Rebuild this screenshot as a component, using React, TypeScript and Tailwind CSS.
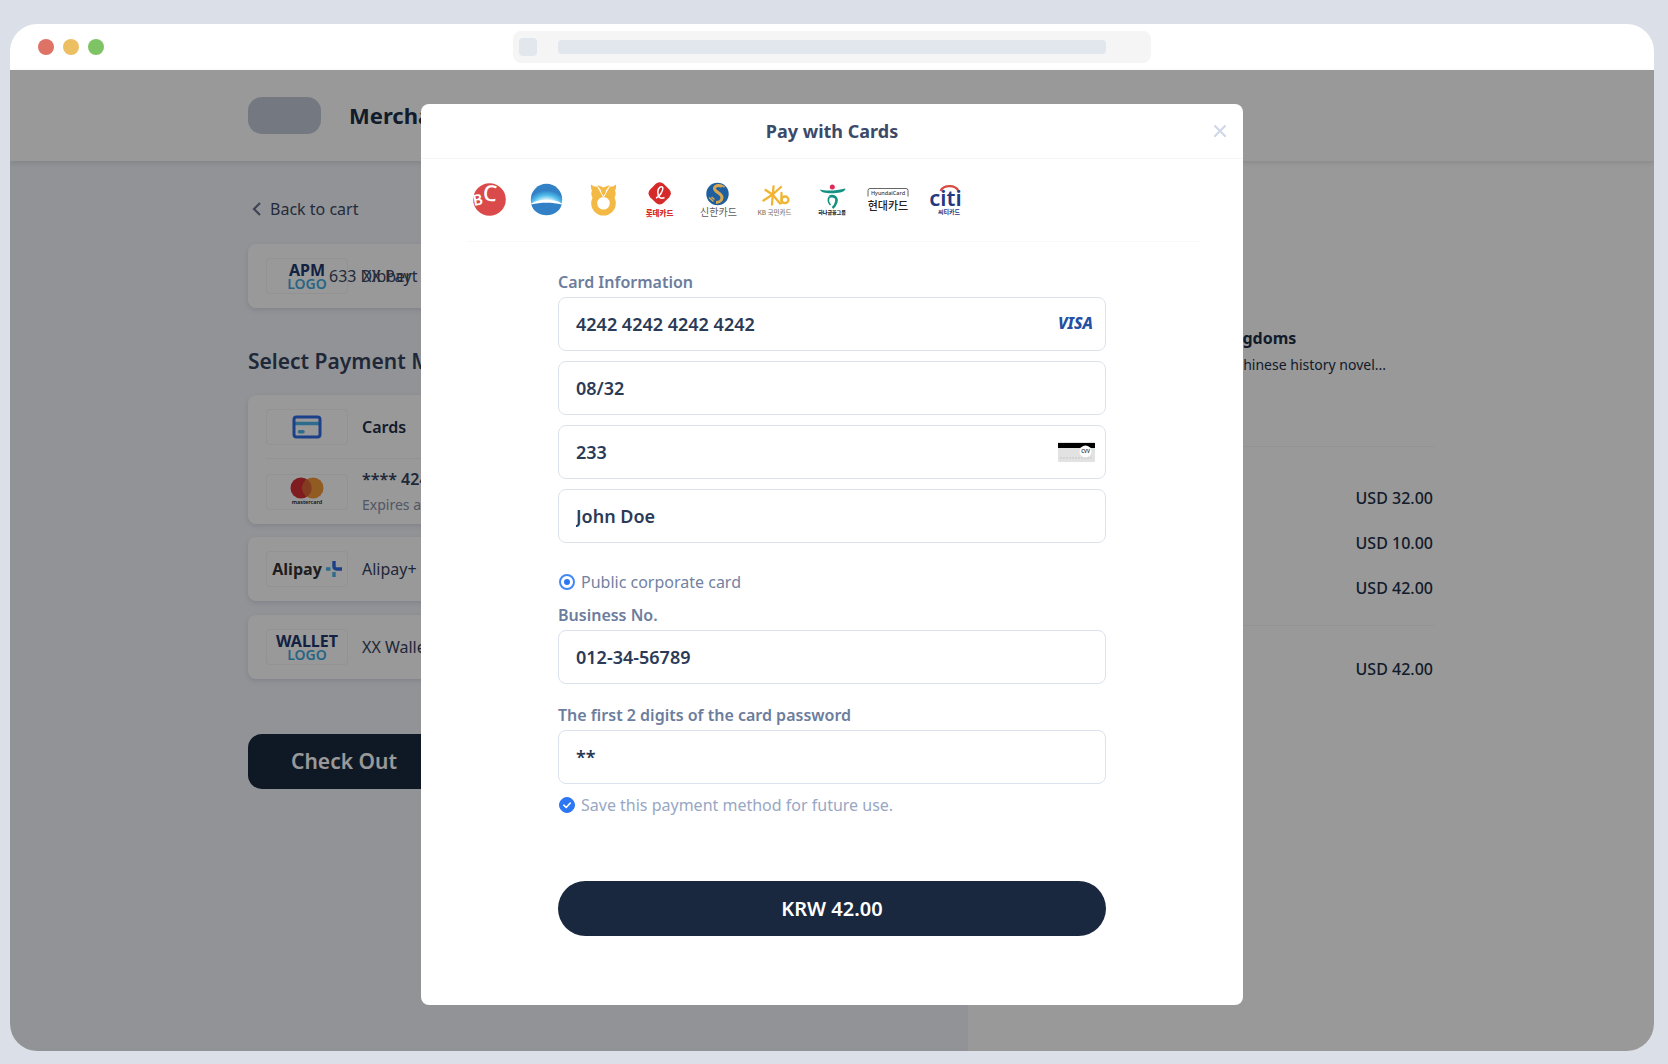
import { useState } from "react";
import type { ReactNode } from "react";
import { X } from "lucide-react";

const KR = '"Noto Sans CJK KR", sans-serif';
const LATIN = '"Noto Sans", sans-serif';

function BrandMark({ label, children }: { label: string; children: ReactNode }) {
  return (
    <svg role="img" aria-label={label} width="44" height="44" viewBox="0 0 44 44">
      {children}
    </svg>
  );
}

function CardBrands() {
  return (
    <div className="flex items-center gap-[13px]">
      <BrandMark label="BC Card">
        <circle cx="22.5" cy="22.5" r="16.3" fill="#da4a4a" />
        <g fill="#fff" fontFamily={LATIN} fontWeight="600">
          <text x="7" y="29" fontSize="15" transform="rotate(-12 7 29)">B</text>
          <text x="15.500" y="23.500" fontSize="22" fontWeight="500" transform="rotate(4 15.5 23.5)">C</text>
        </g>
      </BrandMark>

      <BrandMark label="Woori Card">
        <defs>
          <radialGradient id="dome" gradientUnits="userSpaceOnUse" cx="22.5" cy="36" r="27">
            <stop offset="0.45" stopColor="#ffffff" />
            <stop offset="0.66" stopColor="#4fbdec" />
            <stop offset="0.84" stopColor="#3280c5" />
          </radialGradient>
        </defs>
        <circle cx="22.5" cy="22.5" r="15.7" fill="url(#dome)" />
        <path d="M7.200 26.500C15 21.500 30 21.500 37.800 26.500C36 34 30 38.200 22.500 38.200S9 34 7.200 26.500Z" fill="#fff" />
        <path d="M7.300 27.500C17 25 28 25 37.700 27.500C36 34 30 38.200 22.500 38.200S9 34 7.300 27.500Z" fill="#3280c5" />
      </BrandMark>

      <BrandMark label="NH Card">
        <circle cx="22.5" cy="26.3" r="9.3" fill="none" stroke="#f3b944" strokeWidth="6" />
        <path d="M10 7.500L13 9.500H17.500L20.500 18.500L12.500 22C10 19 9.800 16 11 13.500C10 12 9.700 10 10 7.500Z" fill="#f3b944" />
        <path d="M35 7.500L32 9.500H27.500L24.500 18.500L32.500 22C35 19 35.200 16 34 13.500C35 12 35.300 10 35 7.500Z" fill="#f3b944" />
        <path d="M16.500 8L22.500 10.500L28.500 8L22.500 17.500Z" fill="#f3b944" />
        <path d="M16.500 9.500L22.500 20L28.500 9.500" fill="none" stroke="#fff" strokeWidth="1" />
      </BrandMark>

      <BrandMark label="Lotte Card">
        <rect x="12.200" y="6.800" width="19" height="19" rx="5.500" transform="rotate(45 21.7 16.3)" fill="#d62a2a" />
        <path d="M18 21C21.500 19.500 25.500 14 24.800 10.500C23.800 8.500 20 10 19.800 15C19.700 20 22.500 22.500 26.500 20.500" fill="none" stroke="#fff" strokeWidth="1.500" />
        <text x="21.500" y="38.500" fontSize="7.500" fontWeight="900" textAnchor="middle" fill="#d62a2a" fontFamily={KR}>롯데카드</text>
      </BrandMark>

      <BrandMark label="Shinhan Card">
        <circle cx="22.500" cy="17" r="11.200" fill="#1f5f9f" />
        <path d="M27 9.500C21.500 7 17.500 10.500 20.500 13.500C22.500 16 27.500 17 27 21C26.500 24.500 23 25.500 21 25.500" fill="none" stroke="#d7a650" strokeWidth="3" />
        <path d="M25.500 8L29.500 10M14 20.500L18.500 24.500M16.500 20L19.500 22.500" stroke="#d7a650" strokeWidth="1.600" fill="none" />
        <text x="23.500" y="38.500" fontSize="10" textAnchor="middle" fill="#5c5c5c" fontFamily={KR}>신한카드</text>
      </BrandMark>

      <BrandMark label="KB Card">
        <g fill="none" stroke="#f0b432" strokeWidth="2.300" strokeLinecap="round">
          <path d="M21.500 9.500L20 27.500" />
          <path d="M13.500 13L20.500 17.500L29 10M11.500 23.500L20.500 17.500L28 26.500" />
          <path d="M29.500 16V26" />
          <ellipse cx="33" cy="22.800" rx="3.500" ry="3.300" />
        </g>
        <text x="22.500" y="38" fontSize="6.500" fontWeight="500" textAnchor="middle" fill="#85796c" fontFamily={KR}>KB 국민카드</text>
      </BrandMark>

      <BrandMark label="Hana Card">
        <circle cx="23.300" cy="10" r="2.500" fill="#e02b58" />
        <path d="M11 12.500C18 14.500 28 13.500 36.500 11.500C36 15 31 15.800 25 16.200C18 16.500 12 16 11 12.500Z" fill="#159184" />
        <path d="M20.500 19.500C25 18.200 28.500 20.500 27.300 25C26.600 27.500 25.500 29.500 23.500 31" fill="none" stroke="#159184" strokeWidth="2.600" />
        <path d="M20.500 19.500C18.500 23 19.500 26 21.500 28" fill="none" stroke="#159184" strokeWidth="1.600" />
        <text x="23" y="37" fontSize="5" fontWeight="900" textAnchor="middle" fill="#222" fontFamily={KR}>하나금융그룹</text>
      </BrandMark>

      <BrandMark label="Hyundai Card">
        <path d="M2 19.500V13.500Q2 11.500 4 11.500H40Q42 11.500 42 13.500V19.500" fill="none" stroke="#555" strokeWidth="0.900" />
        <text x="22" y="18" fontSize="5.500" fontWeight="500" textAnchor="middle" fill="#333" fontFamily={LATIN}>HyundaiCard</text>
        <text x="22" y="32.500" fontSize="11" fontWeight="500" textAnchor="middle" fill="#222" fontFamily={KR}>현대카드</text>
      </BrandMark>

      <BrandMark label="Citi Card">
        <path d="M17.500 14C20.500 7.500 32.500 7.500 35.500 14" fill="none" stroke="#d94a43" strokeWidth="2.200" />
        <text x="22.500" y="29" fontSize="22" fontWeight="600" textAnchor="middle" fill="#26387f" fontFamily={LATIN}>citi</text>
        <text x="26" y="37" fontSize="6" fontWeight="700" textAnchor="middle" fill="#26387f" fontFamily={KR}>씨티카드</text>
      </BrandMark>
    </div>
  );
}

function LogoBox({ children }: { children: ReactNode }) {
  return (
    <div className="flex h-9 w-[82px] shrink-0 flex-col items-center justify-center rounded border border-[#f3f3f5]">
      {children}
    </div>
  );
}

function WordLogo({ name }: { name: string }) {
  return (
    <LogoBox>
      <span className="pt-[2px] text-[16px] leading-[14px] font-bold text-[#20386f]">{name}</span>
      <span className="text-[14px] leading-[14px] font-semibold text-[#43a9dc]">LOGO</span>
    </LogoBox>
  );
}

function CardIcon() {
  return (
    <svg width="30" height="24" viewBox="0 0 30 24" aria-hidden="true">
      <path d="M2 8.500H28" stroke="#4cb4ea" strokeWidth="3.500" />
      <path d="M7.500 16.800H11" stroke="#4cb4ea" strokeWidth="3.500" strokeLinecap="round" />
      <rect x="2" y="2" width="26" height="20" rx="2.500" fill="none" stroke="#2f6ce5" strokeWidth="3" />
    </svg>
  );
}

function MastercardLogo() {
  return (
    <svg width="34" height="29" viewBox="0 0 34 29" role="img" aria-label="Mastercard">
      <circle cx="11" cy="11" r="10.500" fill="#d32f35" />
      <circle cx="23" cy="11" r="10.500" fill="#f09a3a" />
      <path d="M17 2.300A10.500 10.500 0 0 1 17 19.700A10.500 10.500 0 0 1 17 2.300Z" fill="#dd6437" />
      <text x="17" y="27" fontSize="5.500" fontWeight="600" textAnchor="middle" fill="#222" fontFamily={LATIN}>mastercard</text>
    </svg>
  );
}

function AlipayLogo() {
  return (
    <div className="flex items-center gap-1">
      <span className="font-['Open_Sans','Noto_Sans',sans-serif] text-[16px] leading-5 font-bold text-[#333]">Alipay</span>
      <svg width="16" height="16" viewBox="0 0 16 16" aria-hidden="true">
        <path d="M8 0V5.500Q8 8 10.500 8H16" fill="none" stroke="#2f6ce5" strokeWidth="3.400" />
        <path d="M0 8H4.500M8 11V16" fill="none" stroke="#4cb4ea" strokeWidth="3.400" />
      </svg>
    </div>
  );
}

const panel = "rounded-lg bg-white px-[18px] shadow-[0_2px_5px_rgba(60,75,120,0.15)]";

function PaymentMethods() {
  return (
    <div className="w-[58.3%] bg-[#f3f5fb] pt-9 pr-12 pl-[238px]">
      <a href="#cart" className="flex items-center gap-2 pl-1 text-[16px] leading-6 text-[#3c4964]">
        <svg width="10" height="14" viewBox="0 0 10 14" aria-hidden="true">
          <path d="M8 1L2 7L8 13" fill="none" stroke="#65728f" strokeWidth="2.200" />
        </svg>
        Back to cart
      </a>

      <div className={`relative mt-[23px] flex h-16 items-center gap-[14px] text-[16px] text-[#3c4964] ${panel}`}>
        <WordLogo name="APM" />
        <span>XX Pay</span>
        <span className="absolute left-[81px]">633 Dibbert</span>
      </div>

      <h2 className="mt-[38px] text-[21px] leading-[30px] font-semibold text-[#35435f]">Select Payment Method</h2>

      <div className={`mt-[19px] text-[16px] text-[#35435f] ${panel}`}>
        <div className="flex h-16 items-center gap-[14px] border-b border-[#f3f3f6]">
          <LogoBox><CardIcon /></LogoBox>
          <span className="font-semibold text-[#212f48]">Cards</span>
        </div>
        <div className="flex h-[65px] items-center gap-[14px]">
          <LogoBox><MastercardLogo /></LogoBox>
          <div className="leading-[25px]">
            <p className="font-semibold">**** 4242</p>
            <p className="text-[14px] text-[#8592ad]">Expires at 08/32</p>
          </div>
        </div>
      </div>

      <div className={`mt-[13px] flex h-16 items-center gap-[14px] text-[16px] text-[#35435f] ${panel}`}>
        <LogoBox><AlipayLogo /></LogoBox>
        Alipay+
      </div>
      <div className={`mt-[14px] flex h-16 items-center gap-[14px] text-[16px] text-[#35435f] ${panel}`}>
        <WordLogo name="WALLET" />
        XX Wallet
      </div>

      <button type="button" className="mt-[55px] h-[55px] w-48 rounded-[14px] bg-[#1a283f] text-[21px] font-semibold text-white">
        Check Out
      </button>
    </div>
  );
}

function OrderSummary() {
  return (
    <div className="flex-1 bg-white pt-[163px] pr-[219px] pl-[69px] text-[#212f48]">
      <div className="pb-[68px]">
        <h3 className="text-[16px] leading-7 font-bold whitespace-nowrap">Romance of the Three Kingdoms</h3>
        <p className="text-[14px] leading-[26px] whitespace-nowrap">A long and very widely known chinese history novel...</p>
      </div>
      <dl className="border-y border-[#f5f6f8] pt-7 pr-[2px] pb-[15px] text-[16px] font-medium">
        {[
          ["Subtotal", "USD 32.00"],
          ["Shipping", "USD 10.00"],
          ["Total", "USD 42.00"],
        ].map(([name, amount]) => (
          <div key={name} className="flex h-[45px] items-center justify-between">
            <dt>{name}</dt>
            <dd>{amount}</dd>
          </div>
        ))}
      </dl>
      <dl className="pt-5 pr-[2px] text-[16px] font-medium">
        <div className="flex h-[45px] items-center justify-between">
          <dt>Amount due</dt>
          <dd>USD 42.00</dd>
        </div>
      </dl>
    </div>
  );
}

const inputClass =
  "block h-[54px] w-full rounded-lg border border-[#dbe1ed] bg-white px-[17px] text-[18px] font-semibold text-[#2b3a56] outline-none focus:border-blue-400";
const labelClass = "block text-[16px] leading-6 font-semibold text-[#6c7d9d]";

function PaymentForm() {
  const [form, setForm] = useState({
    number: "4242 4242 4242 4242",
    expiry: "08/32",
    cvv: "233",
    holder: "John Doe",
    business: "012-34-56789",
    password: "**",
  });
  const [save, setSave] = useState(true);

  const field = (name: keyof typeof form) => ({
    name,
    value: form[name],
    onChange: (e: { target: { value: string } }) => setForm({ ...form, [name]: e.target.value }),
    className: inputClass,
  });

  return (
    <form className="mx-auto w-2/3 pt-7 pb-[69px]" onSubmit={(e) => e.preventDefault()}>
      <label htmlFor="number" className={labelClass}>Card Information</label>
      <div className="mt-[3px] flex flex-col gap-[10px]">
        <div className="relative">
          <input id="number" {...field("number")} />
          <span className="absolute top-4 right-[13px] text-[16px] leading-5 font-extrabold text-[#2450a4] italic">VISA</span>
        </div>
        <input aria-label="Expiry date" {...field("expiry")} />
        <div className="relative">
          <input aria-label="Security code" {...field("cvv")} />
          <svg className="absolute top-[17px] right-[11px]" width="37" height="20" viewBox="0 0 37 20" aria-hidden="true">
            <rect width="37" height="20" rx="1" fill="#e2e2e2" />
            <rect y="1" width="37" height="5" fill="#000" />
            <path d="M2 16H34" stroke="#cfcfcf" strokeWidth="1.500" strokeDasharray="2 1" />
            <circle cx="27.500" cy="9.500" r="6" fill="#fff" />
            <text x="27.500" y="11.300" fontSize="4.500" fontWeight="700" textAnchor="middle" fill="#444" fontFamily={LATIN}>CVV</text>
          </svg>
        </div>
        <input aria-label="Cardholder name" {...field("holder")} />
      </div>

      <label className="mt-[27px] flex items-center gap-[6px] pl-px text-[16px] leading-6 text-[#7282a1]">
        <input
          type="radio"
          name="cardType"
          defaultChecked
          className="size-4 appearance-none rounded-full border-2 border-[#4288f7] bg-white p-[3px] checked:bg-[#2e77f4] checked:bg-clip-content"
        />
        Public corporate card
      </label>

      <label htmlFor="business" className={`mt-[9px] mb-[3px] ${labelClass}`}>Business No.</label>
      <input id="business" {...field("business")} />

      <label htmlFor="password" className={`mt-[19px] mb-[3px] ${labelClass}`}>The first 2 digits of the card password</label>
      <input id="password" {...field("password")} />

      <label className="relative mt-[9px] flex items-center gap-[6px] pl-px text-[16px] leading-6 text-[#98a7c4]">
        <input
          type="checkbox"
          checked={save}
          onChange={(e) => setSave(e.target.checked)}
          className="size-4 appearance-none rounded-full border border-[#2e77f4] checked:bg-[#2e77f4]"
        />
        {save && (
          <svg className="pointer-events-none absolute left-px" width="16" height="16" viewBox="0 0 16 16" aria-hidden="true">
            <path d="M4.800 8.200L7.200 10.500L11.300 6" fill="none" stroke="#fff" strokeWidth="1.600" strokeLinecap="round" strokeLinejoin="round" />
          </svg>
        )}
        Save this payment method for future use.
      </label>

      <button type="submit" className="mt-16 h-[55px] w-full rounded-full bg-[#1a283f] text-[20px] font-semibold text-white">
        KRW 42.00
      </button>
    </form>
  );
}

function PaymentDialog() {
  return (
    <div className="absolute inset-0 flex items-start justify-center bg-black/40 pt-[34px]">
      <section role="dialog" aria-labelledby="dialog-title" className="w-1/2 rounded-lg bg-white">
        <header className="relative flex h-[55px] items-center justify-center border-b border-[#f5f6f8]">
          <h2 id="dialog-title" className="text-[18px] font-bold text-[#3b4a69]">Pay with Cards</h2>
          <button type="button" aria-label="Close" className="absolute right-[13px] text-[#cfd8ea]">
            <X size={20} strokeWidth={2.5} />
          </button>
        </header>
        <div className="mr-[42px] ml-[46px] border-b border-[#f7f8fa] pt-[18px] pb-5">
          <CardBrands />
        </div>
        <PaymentForm />
      </section>
    </div>
  );
}

export default function App() {
  return (
    <div className="flex min-h-screen bg-[#dadfe8] pt-6 pr-[14px] pb-[13px] pl-[10px] font-['Noto_Sans','Noto_Sans_CJK_KR',sans-serif]">
      <div className="flex flex-1 flex-col overflow-hidden rounded-[27px] bg-white">
        <div className="grid h-[46px] grid-cols-[1fr_638px_1fr] items-center">
          <div className="flex gap-[9px] pl-7">
            <span className="size-4 rounded-full bg-[#de7265]" />
            <span className="size-4 rounded-full bg-[#ecbf63]" />
            <span className="size-4 rounded-full bg-[#7ec464]" />
          </div>
          <div className="flex h-8 items-center gap-[21px] rounded-lg bg-[#f5f5f5] pr-[45px] pl-[6px]">
            <span className="size-[18px] rounded bg-[#e2e6ed]" />
            <span className="h-[14px] flex-1 rounded bg-[#e2e6ed]" />
          </div>
        </div>

        <main className="relative flex flex-1 flex-col">
          <header className="relative flex h-[91px] items-center gap-7 bg-white pl-[238px] shadow-[0_2px_5px_rgba(0,0,0,0.1)]">
            <span className="h-[37px] w-[73px] rounded-[14px] bg-[#c0c8d8]" />
            <h1 className="text-[22px] font-bold text-[#212f48]">Merchant</h1>
          </header>
          <div className="flex flex-1">
            <PaymentMethods />
            <OrderSummary />
          </div>
          <PaymentDialog />
        </main>
      </div>
    </div>
  );
}
